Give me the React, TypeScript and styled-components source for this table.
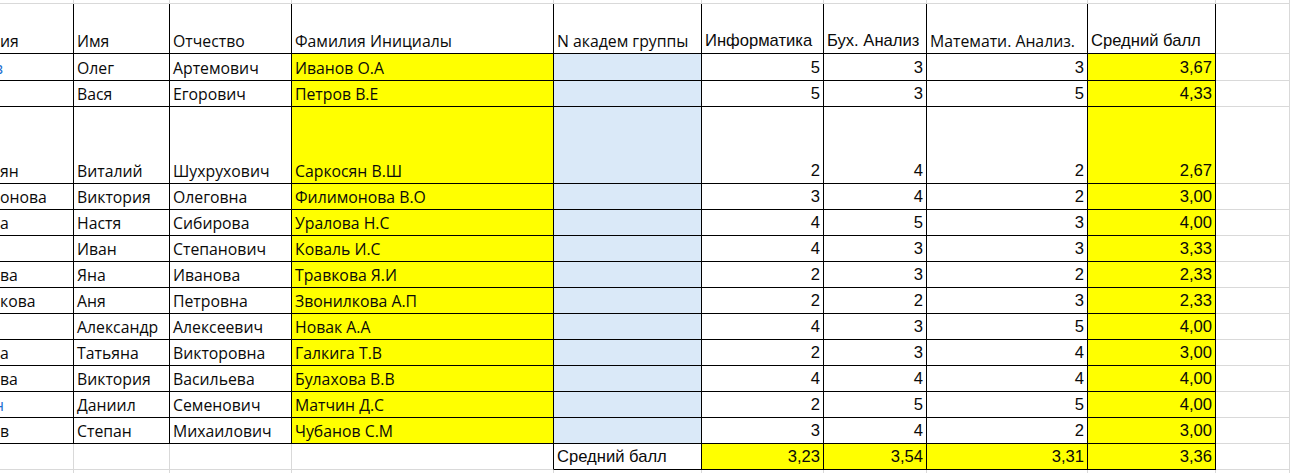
import React from "react";
import styled, { createGlobalStyle } from "styled-components";

const Global = createGlobalStyle`
  html, body { margin: 0; padding: 0; background: #ffffff; }
  body { overflow: hidden; }
`;

const GRID = "#d9d9d9";
const BLACK = "#000000";
const YELLOW = "#ffff00";
const BLUE = "#dae9f8";

const Sheet = styled.div`
  display: flex;
  flex-direction: column;
  width: 1290px;
  height: 473px;
  overflow: hidden;
`;

const Row = styled.div<{ $h: number }>`
  display: grid;
  grid-template-columns: 74px 96px 122px 262px 148px 122px 103px 161px 128px 74px;
  height: ${(p) => p.$h}px;
  flex: none;
`;

type Font = "aptos" | "arial";

const Cell = styled.div<{
  $rb?: string;
  $bb?: string;
  $bg?: string;
  $right?: boolean;
  $font?: Font;
  $flush?: boolean;
}>`
  box-sizing: border-box;
  border-right: 1px solid ${(p) => p.$rb || GRID};
  border-bottom: 1px solid ${(p) => p.$bb || GRID};
  background: ${(p) => p.$bg || "#ffffff"};
  display: flex;
  align-items: flex-end;
  justify-content: ${(p) => (p.$right ? "flex-end" : "flex-start")};
  padding: 0 ${(p) => (p.$flush ? 0 : 3)}px 2px ${(p) => (p.$flush ? 0 : 3)}px;
  overflow: hidden;
  white-space: nowrap;
  color: #0a0a0a;
  font-family: ${(p) =>
    p.$font === "arial"
      ? '"Liberation Sans", Arial, sans-serif'
      : '"Open Sans", "Noto Sans", sans-serif'};
  font-size: ${(p) => (p.$font === "arial" ? 16.6 : 15.8)}px;
  line-height: 20px;
`;

const Tail = styled.span<{ $link?: boolean }>`
  color: ${(p) => (p.$link ? "#1f6fd1" : "inherit")};
  margin-left: ${(p) => (p.$link ? -6 : 0)}px;
`;

type Student = {
  tail: string;
  link?: boolean;
  name: string;
  patr: string;
  fi: string;
  inf: number;
  bux: number;
  mat: number;
  avg: string;
  h: number;
};

const students: Student[] = [
  { tail: "в", link: true, name: "Олег", patr: "Артемович", fi: "Иванов О.А", inf: 5, bux: 3, mat: 3, avg: "3,67", h: 27 },
  { tail: "", name: "Вася", patr: "Егорович", fi: "Петров В.Е", inf: 5, bux: 3, mat: 5, avg: "4,33", h: 26 },
  { tail: "ян", name: "Виталий", patr: "Шухрухович", fi: "Саркосян В.Ш", inf: 2, bux: 4, mat: 2, avg: "2,67", h: 77 },
  { tail: "онова", name: "Виктория", patr: "Олеговна", fi: "Филимонова В.О", inf: 3, bux: 4, mat: 2, avg: "3,00", h: 26 },
  { tail: "а", name: "Настя", patr: "Сибирова", fi: "Уралова Н.С", inf: 4, bux: 5, mat: 3, avg: "4,00", h: 26 },
  { tail: "", name: "Иван", patr: "Степанович", fi: "Коваль И.С", inf: 4, bux: 3, mat: 3, avg: "3,33", h: 26 },
  { tail: "ва", name: "Яна", patr: "Иванова", fi: "Травкова Я.И", inf: 2, bux: 3, mat: 2, avg: "2,33", h: 26 },
  { tail: "кова", name: "Аня", patr: "Петровна", fi: "Звонилкова А.П", inf: 2, bux: 2, mat: 3, avg: "2,33", h: 26 },
  { tail: "", name: "Александр", patr: "Алексеевич", fi: "Новак А.А", inf: 4, bux: 3, mat: 5, avg: "4,00", h: 26 },
  { tail: "а", name: "Татьяна", patr: "Викторовна", fi: "Галкига Т.В", inf: 2, bux: 3, mat: 4, avg: "3,00", h: 26 },
  { tail: "ва", name: "Виктория", patr: "Васильева", fi: "Булахова В.В", inf: 4, bux: 4, mat: 4, avg: "4,00", h: 26 },
  { tail: "н", link: true, name: "Даниил", patr: "Семенович", fi: "Матчин Д.С", inf: 2, bux: 5, mat: 5, avg: "4,00", h: 26 },
  { tail: "в", name: "Степан", patr: "Михаилович", fi: "Чубанов С.М", inf: 3, bux: 4, mat: 2, avg: "3,00", h: 26 },
];

const EmptyRow: React.FC<{ h: number }> = ({ h }) => (
  <Row $h={h}>
    {Array.from({ length: 10 }).map((_, i) => (
      <Cell key={i} />
    ))}
  </Row>
);

export default function App() {
  return (
    <>
      <Global />
      <Sheet>
        <EmptyRow h={4} />
        <Row $h={50}>
          <Cell $flush $rb={BLACK} $bb={BLACK}>ия</Cell>
          <Cell $rb={BLACK} $bb={BLACK}>Имя</Cell>
          <Cell $rb={BLACK} $bb={BLACK}>Отчество</Cell>
          <Cell $rb={BLACK} $bb={BLACK}>Фамилия Инициалы</Cell>
          <Cell $rb={BLACK} $bb={BLACK}>N академ группы</Cell>
          <Cell $rb={BLACK} $bb={BLACK} $font="arial">Информатика</Cell>
          <Cell $rb={BLACK} $bb={BLACK} $font="arial">Бух. Анализ</Cell>
          <Cell $rb={BLACK} $bb={BLACK}>Математи. Анализ.</Cell>
          <Cell $rb={BLACK} $bb={BLACK} $font="arial">Средний балл</Cell>
          <Cell />
        </Row>
        {students.map((s) => (
          <Row $h={s.h} key={s.fi}>
            <Cell $flush $rb={BLACK} $bb={BLACK}>
              <Tail $link={s.link}>{s.tail}</Tail>
            </Cell>
            <Cell $rb={BLACK} $bb={BLACK}>{s.name}</Cell>
            <Cell $rb={BLACK} $bb={BLACK}>{s.patr}</Cell>
            <Cell $rb={BLACK} $bb={BLACK} $bg={YELLOW}>{s.fi}</Cell>
            <Cell $rb={BLACK} $bb={BLACK} $bg={BLUE} />
            <Cell $rb={BLACK} $bb={BLACK} $right $font="arial">{s.inf}</Cell>
            <Cell $rb={BLACK} $bb={BLACK} $right $font="arial">{s.bux}</Cell>
            <Cell $rb={BLACK} $bb={BLACK} $right $font="arial">{s.mat}</Cell>
            <Cell $rb={BLACK} $bb={BLACK} $right $font="arial" $bg={YELLOW}>{s.avg}</Cell>
            <Cell />
          </Row>
        ))}
        <Row $h={26}>
          <Cell />
          <Cell />
          <Cell />
          <Cell $rb={BLACK} />
          <Cell $rb={BLACK} $bb={BLACK} $font="arial">Средний балл</Cell>
          <Cell $rb={BLACK} $bb={BLACK} $right $font="arial" $bg={YELLOW}>3,23</Cell>
          <Cell $rb={BLACK} $bb={BLACK} $right $font="arial" $bg={YELLOW}>3,54</Cell>
          <Cell $rb={BLACK} $bb={BLACK} $right $font="arial" $bg={YELLOW}>3,31</Cell>
          <Cell $rb={BLACK} $bb={BLACK} $right $font="arial" $bg={YELLOW}>3,36</Cell>
          <Cell />
        </Row>
        <EmptyRow h={20} />
      </Sheet>
    </>
  );
}
